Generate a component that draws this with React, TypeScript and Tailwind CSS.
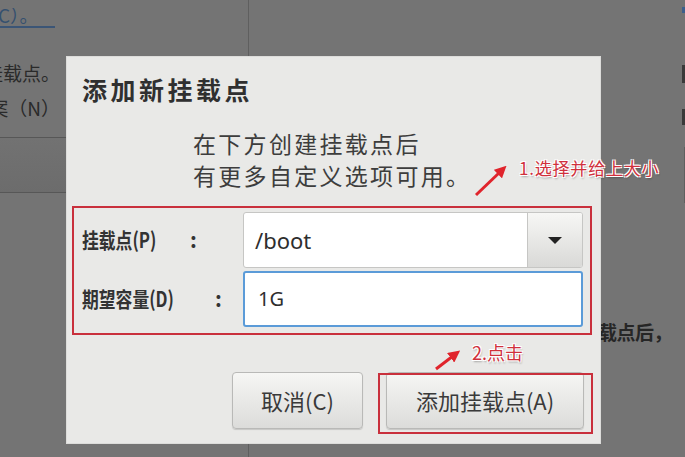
import React from "react";

function Backdrop() {
  return (
    <div className="flex h-full">
      <div className="flex w-[249px] shrink-0 flex-col border-r border-[#5f5f5f]">
        <div className="flex h-[137px] flex-col">
          <div className="mt-[8px] flex h-[20px] w-[55px] items-end justify-start overflow-hidden whitespace-nowrap border-b-2 border-[#3b5576] text-[19px] leading-[22px] text-[#34506f]">
            <span className="-ml-[2px]">C）。</span>
          </div>
          <div className="mt-[33px] flex h-[24px] w-[60px] justify-end overflow-hidden whitespace-nowrap text-[19px] leading-[24px] text-[#2a2a2a]">
            挂载点。
          </div>
          <div className="mt-[11px] flex h-[24px] w-[60px] justify-end overflow-hidden whitespace-nowrap text-[19px] leading-[24px] text-[#2a2a2a]">
            方案（N）
          </div>
        </div>
        <div className="h-[56px] border-y border-[#575757] bg-gradient-to-b from-[#727272] to-[#6c6c6c]" />
      </div>
      <div className="flex flex-1">
        <div className="flex flex-1 flex-col">
          <div className="ml-[349px] mt-[319px] whitespace-nowrap text-[19px] font-semibold leading-[26px] tracking-[-0.5px] text-[#262626]">
            载点后，
          </div>
        </div>
        <div className="flex w-[5px] flex-col items-end">
          <div className="mt-[7px] h-[6px] w-[3px] bg-[#3d5f8c]" />
          <div className="mt-[52px] h-[18px] w-[3px] bg-[#3a3a3a]" />
          <div className="mt-[26px] h-[16px] w-[3px] bg-[#3a3a3a]" />
          <div className="mt-[22px] h-[56px] w-[1px] bg-[#5f5f5f]" />
        </div>
      </div>
    </div>
  );
}

function Dialog() {
  return (
    <div className="absolute left-[67px] top-[57px] flex h-[386px] w-[533px] flex-col bg-[#e9e9e7] shadow-[0_0_0_1px_#dcdcda]">
      <h2 className="pl-[15px] pt-[18px] text-[25px] font-bold leading-[28px] tracking-[3.5px] text-[#303030]">
        添加新挂载点
      </h2>
      <p className="mt-[24px] pl-[126px] text-[23px] leading-[32px] tracking-[2.3px] text-[#3d3d3d]">
        在下方创建挂载点后
        <br />
        有更多自定义选项可用。
      </p>
      <div className="mt-[21px] grid grid-cols-[161px_340px] gap-y-[3px] pl-[15px]">
        <label className="flex items-center text-[21px] font-bold text-[#333]">
          <span className="inline-block w-[108px] whitespace-nowrap">
            <span className="inline-block origin-left scale-x-[0.8]">挂载点(P)</span>
          </span>
          <span>:</span>
        </label>
        <div className="flex h-[56px] overflow-hidden rounded-[3px] border border-[#c6c6c4] bg-white">
          <div className="flex flex-1 items-center pl-[11px] font-['Noto_Sans',sans-serif] text-[22px] text-[#2e2e2e]">
            /boot
          </div>
          <div className="flex w-[55px] items-center justify-center border-l border-[#c6c6c4] bg-gradient-to-b from-[#f7f7f5] to-[#d9d9d7]">
            <svg width="16" height="9" viewBox="0 0 16 9">
              <polygon points="1,1 15,1 8,8" fill="#222" />
            </svg>
          </div>
        </div>
        <label className="flex items-center text-[21px] font-bold text-[#333]">
          <span className="inline-block w-[133px] whitespace-nowrap">
            <span className="inline-block origin-left scale-x-[0.8]">期望容量(D)</span>
          </span>
          <span>:</span>
        </label>
        <div className="flex h-[56px] items-center rounded-[3px] border-2 border-[#5b9bd8] bg-white pl-[13px] font-['Noto_Sans',sans-serif] text-[20px] text-[#2e2e2e]">
          1G
        </div>
      </div>
      <div className="mt-[45px] flex justify-end gap-[23px] pr-[16px]">
        <button className="h-[57px] w-[131px] rounded-[4px] border border-[#b9b9b7] bg-gradient-to-b from-[#f6f6f4] to-[#dcdcda] text-[22px] text-[#3a3a3a] shadow-[0_1px_1px_rgba(0,0,0,0.15)]">
          取消(C)
        </button>
        <button className="h-[57px] w-[198px] rounded-[4px] border border-[#b9b9b7] bg-gradient-to-b from-[#f6f6f4] to-[#dcdcda] text-[22px] text-[#3a3a3a] shadow-[0_1px_1px_rgba(0,0,0,0.15)]">
          添加挂载点(A)
        </button>
      </div>
    </div>
  );
}

function Annotations() {
  return (
    <>
      <div className="pointer-events-none absolute left-[72px] top-[206px] h-[129px] w-[520px] border-2 border-[#c9303c]" />
      <div className="pointer-events-none absolute left-[378px] top-[373px] h-[61px] w-[215px] border-2 border-[#c9303c]" />
      <div className="absolute left-[519px] top-[157px] whitespace-nowrap text-[17px] leading-[22px] tracking-[0.8px] text-[#d0303c] [text-shadow:1px_1px_0_#fff,-1px_-1px_0_#fff,1px_-1px_0_#fff,-1px_1px_0_#fff,1px_2px_2px_rgba(0,0,0,0.3)]">
        1.选择并给上大小
      </div>
      <div className="absolute left-[472px] top-[340px] whitespace-nowrap text-[18px] leading-[24px] text-[#d0303c] [text-shadow:1px_1px_0_#fff,-1px_-1px_0_#fff,1px_-1px_0_#fff,-1px_1px_0_#fff,1px_2px_2px_rgba(0,0,0,0.3)]">
        2.点击
      </div>
      <svg className="pointer-events-none absolute left-0 top-0" width="685" height="457">
        <defs>
          <marker id="ah" markerWidth="4" markerHeight="4" refX="1" refY="2" orient="auto">
            <path d="M0,0 L4,2 L0,4 z" fill="#e0242c" />
          </marker>
        </defs>
        <line x1="476" y1="195" x2="500" y2="172" stroke="#e0242c" strokeWidth="3" markerEnd="url(#ah)" />
        <line x1="436" y1="369" x2="453" y2="356" stroke="#e0242c" strokeWidth="3" markerEnd="url(#ah)" />
      </svg>
    </>
  );
}

export default function App() {
  return (
    <div className="relative h-[457px] w-[685px] overflow-hidden bg-[#747474] font-['Noto_Sans_CJK_SC',sans-serif]">
      <Backdrop />
      <Dialog />
      <Annotations />
    </div>
  );
}
